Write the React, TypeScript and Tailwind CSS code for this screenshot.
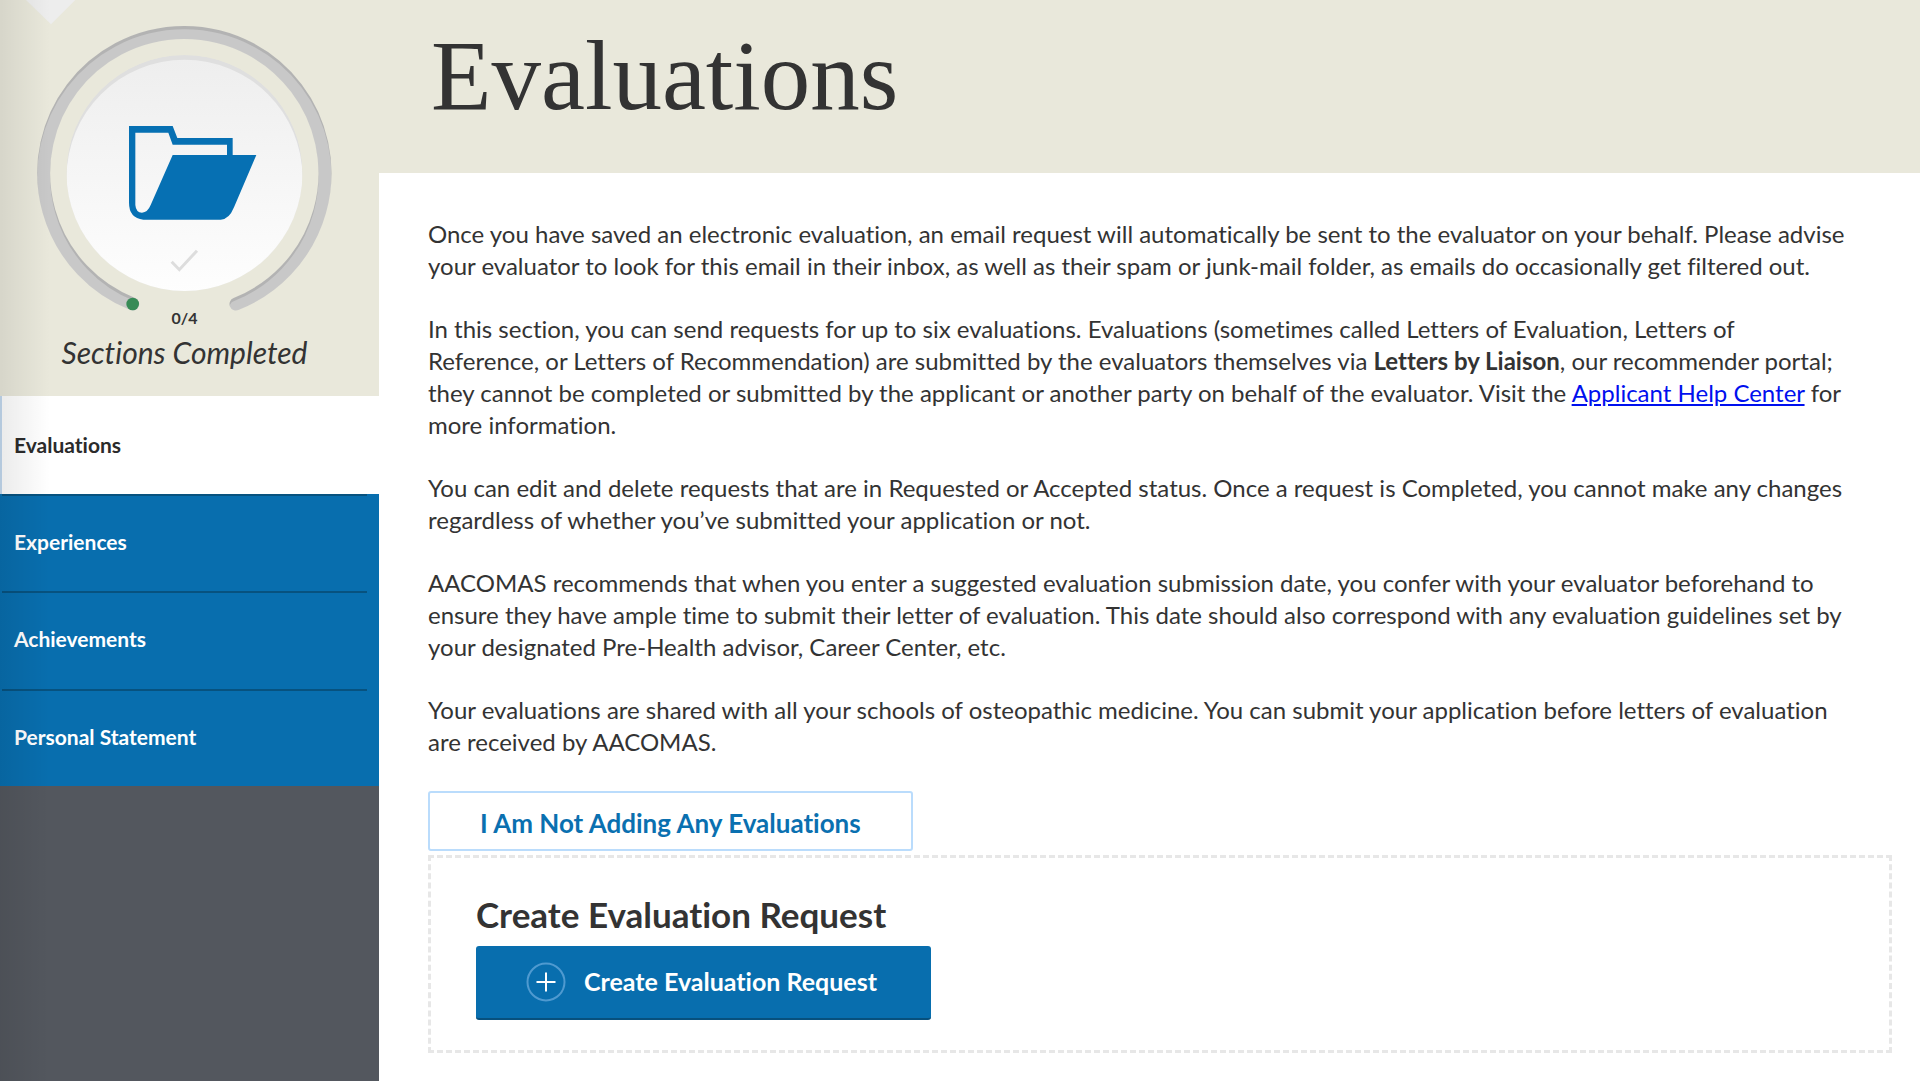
type NavItem = {
  label: string;
  href: string;
};

const NAV_ITEMS: NavItem[] = [
  { label: "Evaluations", href: "#evaluations" },
  { label: "Experiences", href: "#experiences" },
  { label: "Achievements", href: "#achievements" },
  { label: "Personal Statement", href: "#personal-statement" },
];

const RING_PATH = "M398 912A422 422 0 1 1 708 912";

function ProgressDial() {
  return (
    <svg viewBox="0 0 1137 924" className="block h-[308px] w-full overflow-visible" aria-hidden="true">
      <defs>
        <linearGradient id="disc" x1="0" y1="0" x2="0" y2="1">
          <stop offset="0" stopColor="#eeeeee" />
          <stop offset="1" stopColor="#fefefe" />
        </linearGradient>
        <mask id="ring" maskUnits="userSpaceOnUse" x="0" y="0" width="1137" height="960">
          <path d={RING_PATH} fill="none" stroke="#fff" strokeWidth="39" strokeLinecap="round" />
        </mask>
        <clipPath id="disc-clip">
          <circle cx="553.5" cy="519" r="354" />
        </clipPath>
      </defs>

      <path d="M78 0H226L153 73Z" fill="#ededed" />

      <g mask="url(#ring)">
        <rect width="1137" height="960" fill="#b3b3b3" />
        <path
          d={RING_PATH}
          transform="translate(0 10)"
          fill="none"
          stroke="#c8c8c8"
          strokeWidth="39"
          strokeLinecap="round"
        />
      </g>
      <circle cx="398" cy="912" r="19" fill="#378b56" />

      <g clipPath="url(#disc-clip)">
        <circle cx="553.5" cy="519" r="354" fill="#dfdfdf" />
        <circle cx="553.5" cy="533" r="354" fill="url(#disc)" />
      </g>

      <path
        fillRule="evenodd"
        fill="#0670b3"
        d="M387 378H518L532 414H698V465H769L702 622Q687 659 662 659H430Q387 654 387 608ZM406 398V615Q408 638 426 638Q443 637 452 615L518 465H681V434H518L505 398Z"
      />
      <path d="M515 785L538 809L591 752" fill="none" stroke="#dddddd" strokeWidth="9" />
    </svg>
  );
}

function Sidebar() {
  return (
    <aside className="relative w-[379px] shrink-0 bg-[#53575e]">
      <div className="bg-[#e9e8db] pb-[26px] text-[#333]">
        <ProgressDial />
        <div className="pr-2.5 text-center">
          <p className="text-base leading-5 font-bold">0/4</p>
          <p className="mt-1.5 text-[30px] leading-9 italic">Sections Completed</p>
        </div>
      </div>
      <nav className="grid h-[390px] grid-rows-4 bg-[#086eae]">
        {NAV_ITEMS.map((item, i) => (
          <a
            key={item.href}
            href={item.href}
            aria-current={i === 0 ? "page" : undefined}
            className={
              i === 0
                ? "flex items-center border-l-2 border-[#c4daf0] bg-white pl-3 text-[21px] font-bold text-[#2b2b2b]"
                : "flex pr-3 pl-0.5 text-[21px] font-bold text-white"
            }
          >
            {i === 0 ? (
              item.label
            ) : (
              <span className="flex flex-1 items-center border-t-2 border-[#07527f] pb-1 pl-3">{item.label}</span>
            )}
          </a>
        ))}
      </nav>
      <div className="pointer-events-none absolute inset-y-0 left-0 w-[50px] bg-linear-to-r from-black/8 to-transparent" />
    </aside>
  );
}

function PlusCircle() {
  return (
    <svg viewBox="0 0 40 40" className="size-10" fill="none" aria-hidden="true">
      <circle cx="20" cy="20" r="18.5" stroke="#4f9ad0" strokeWidth="2" />
      <path d="M20 10.5V29.5M10.5 20H29.5" stroke="#fff" strokeWidth="2" />
    </svg>
  );
}

export default function App() {
  return (
    <div className="flex min-h-screen bg-white font-['Lato',sans-serif] text-[#333] [font-variant-ligatures:none]">
      <Sidebar />
      <main className="min-w-0 flex-1">
        <header className="h-[173px] bg-[#e9e8db] px-[52px] pt-5">
          <h1 className="font-['Liberation_Serif',serif] text-[99px] leading-[112px]">Evaluations</h1>
        </header>
        <div className="pt-[45px] pr-7 pl-[49px]">
          <div className="space-y-[31px] pr-8 text-2xl leading-8">
            <p>
              Once you have saved an electronic evaluation, an email request will automatically be sent to the
              evaluator on your behalf. Please advise your evaluator to look for this email in their inbox, as well
              as their spam or junk-mail folder, as emails do occasionally get filtered out.
            </p>
            <p>
              In this section, you can send requests for up to six evaluations. Evaluations (sometimes called
              Letters of Evaluation, Letters of <br />
              Reference, or Letters of Recommendation) are submitted by the evaluators themselves via{" "}
              <strong>Letters by Liaison</strong>, our recommender portal; they cannot be completed or submitted by
              the applicant or another party on behalf of the evaluator. Visit the{" "}
              <a href="#help" className="text-[#0010ee] underline">
                Applicant Help Center
              </a>{" "}
              for more information.
            </p>
            <p>
              You can edit and delete requests that are in Requested or Accepted status. Once a request is
              Completed, you cannot make any changes regardless of whether you’ve submitted your application or not.
            </p>
            <p>
              AACOMAS recommends that when you enter a suggested evaluation submission date, you confer with your
              evaluator beforehand to ensure they have ample time to submit their letter of evaluation. This date
              should also correspond with any evaluation guidelines set by your designated Pre-Health advisor,
              Career Center, etc.
            </p>
            <p>
              Your evaluations are shared with all your schools of osteopathic medicine. You can submit your
              application before letters of evaluation are received by AACOMAS.
            </p>
          </div>

          <button
            type="button"
            className="mt-[33px] block rounded-[3px] border-2 border-[#badcfc] px-[50px] pt-3.5 pb-2.5 text-[26px] leading-8 font-bold text-[#0a70b0]"
          >
            I Am Not Adding Any Evaluations
          </button>

          <section className="mt-1 border-[3px] border-dashed border-[#e7e7e7] px-[45px] pt-[34px] pb-[30px]">
            <h2 className="text-[35px] leading-[44px] font-bold">Create Evaluation Request</h2>
            <button
              type="button"
              className="mt-2.5 flex h-[74px] items-center gap-[18px] rounded-[3px] border-b-2 border-[#07507d] bg-[#086eae] pr-[54px] pl-[50px] text-[25px] font-bold text-white"
            >
              <PlusCircle />
              Create Evaluation Request
            </button>
          </section>
        </div>
      </main>
    </div>
  );
}
